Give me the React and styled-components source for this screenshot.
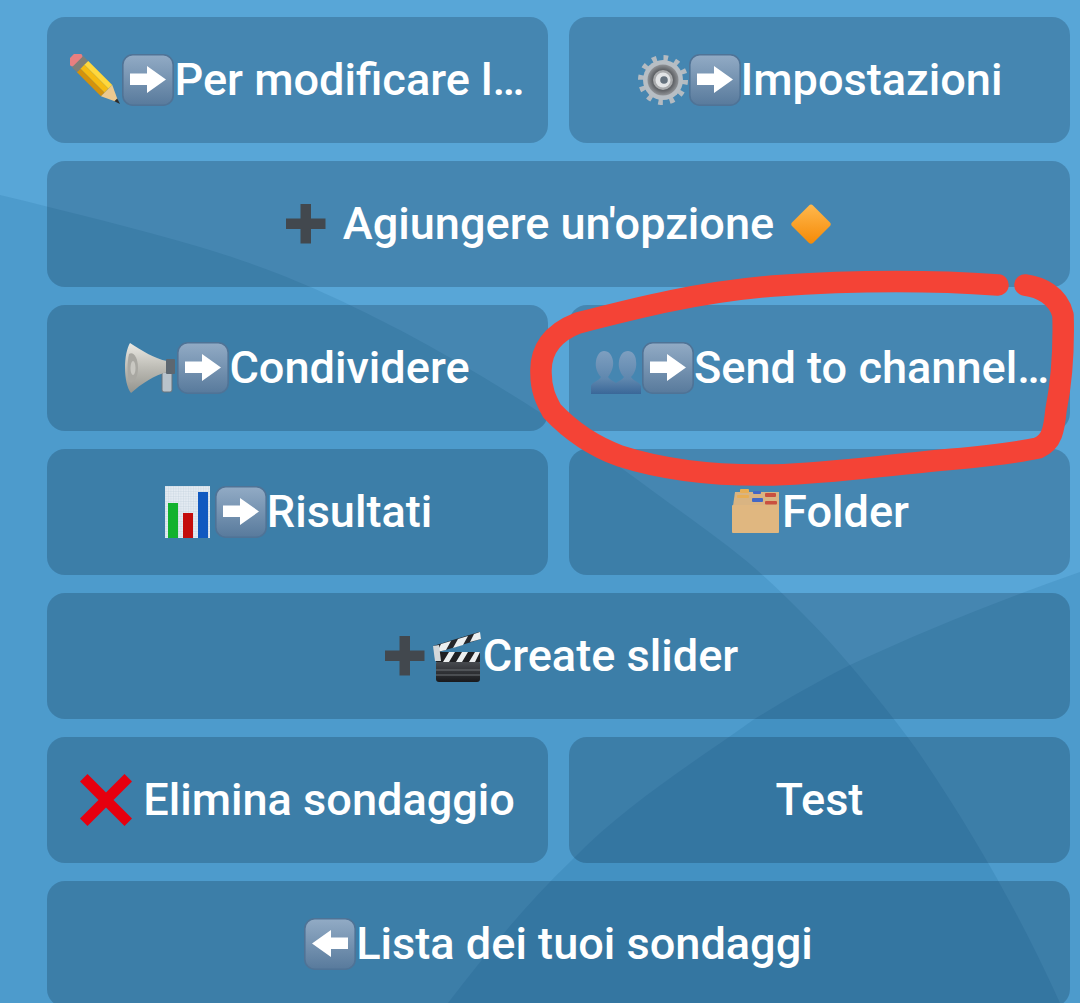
import styled, { createGlobalStyle } from "styled-components";

const GlobalStyle = createGlobalStyle`
  html, body {
    margin: 0;
    padding: 0;
    background: #58a6d7;
  }
`;

const Stage = styled.div`
  position: relative;
  width: 1080px;
  height: 1003px;
  overflow: hidden;
  background: #58a6d7;
  font-family: "Roboto", "Liberation Sans", sans-serif;
`;

const Backdrop = styled.svg`
  position: absolute;
  inset: 0;
`;

const Scribble = styled.svg`
  position: absolute;
  inset: 0;
  pointer-events: none;
`;

const ButtonGrid = styled.div`
  position: relative;
  display: grid;
  grid-template-columns: 501px 501px;
  grid-auto-rows: 126px;
  column-gap: 21px;
  row-gap: 18px;
  padding: 17px 0 0 47px;
`;

const MenuButton = styled.div`
  display: flex;
  align-items: center;
  justify-content: center;
  grid-column: ${(p) => (p.$wide ? "span 2" : "span 1")};
  border-radius: 18px;
  background: rgba(0, 20, 40, 0.21);
`;

const Label = styled.span`
  color: #fff;
  font-size: 45.1px;
  font-weight: 500;
  line-height: 52px;
  white-space: pre;
`;

const Icon = styled.svg`
  flex: none;
  width: 52px;
  height: 52px;
`;

const ArrowBox = ({ back }) => (
  <Icon viewBox="0 0 52 52">
    <defs>
      <linearGradient id="boxFill" x1="0" y1="0" x2="0" y2="1">
        <stop offset="0" stopColor="#92abc5" />
        <stop offset="1" stopColor="#587a9c" />
      </linearGradient>
    </defs>
    <rect x="0.8" y="0.8" width="50.4" height="50.4" rx="10" fill="url(#boxFill)" stroke="#4f7396" strokeWidth="1.6" />
    <path
      d="M8 19.5H25V12L44 25.5 25 39V31H8Z"
      fill="#fff"
      transform={back ? "matrix(-1 0 0 1 52 0)" : undefined}
    />
  </Icon>
);

const Pencil = () => (
  <Icon viewBox="0 0 52 52">
    <g transform="rotate(45 26 26)">
      <rect x="-8" y="18" width="9" height="16" rx="4" fill="#e87f80" />
      <rect x="0" y="18" width="7" height="16" fill="#7d7f78" />
      <rect x="7" y="18" width="34" height="5.5" fill="#ffd83d" />
      <rect x="7" y="23.5" width="34" height="5.5" fill="#f6bb12" />
      <rect x="7" y="29" width="34" height="5" fill="#d4920c" />
      <path d="M41 18L55 24.5V27.5L41 34Z" fill="#ecc98f" />
      <path d="M54 24L60 26 54 28Z" fill="#2b2b2b" />
    </g>
  </Icon>
);

const Gear = () => (
  <Icon viewBox="0 0 52 52">
    <defs>
      <radialGradient id="gearRing">
        <stop offset="0.6" stopColor="#55585c" />
        <stop offset="1" stopColor="#8f9296" />
      </radialGradient>
    </defs>
    <circle cx="26" cy="26" r="22" fill="none" stroke="#b4bbc1" strokeWidth="6" strokeDasharray="4.6 6.9" />
    <circle cx="26" cy="26" r="20" fill="#b7bec4" />
    <circle cx="26" cy="26" r="15.5" fill="url(#gearRing)" />
    <circle cx="26" cy="26" r="10" fill="#a9abad" />
    <circle cx="26" cy="26" r="7.5" fill="#e2e4e6" />
    <circle cx="27" cy="26" r="3.8" fill="#65727e" />
  </Icon>
);

const Megaphone = () => (
  <Icon viewBox="0 0 52 52">
    <defs>
      <linearGradient id="hornFill" x1="0" y1="0" x2="0" y2="1">
        <stop offset="0" stopColor="#eceae4" />
        <stop offset="0.5" stopColor="#bdbcb5" />
        <stop offset="1" stopColor="#94948e" />
      </linearGradient>
    </defs>
    <rect x="37" y="30" width="10" height="20" rx="2" fill="#b9c3cb" stroke="#68727b" />
    <path d="M5 1C16 8 30 17 42 19V30C30 33 16 42 6 51 2 46 0 36 0 26 0 15 2 6 5 1Z" fill="url(#hornFill)" />
    <rect x="41" y="17" width="9" height="15" rx="1" fill="#5d6770" />
    <path d="M4 12C8 9 13 15 13 26 13 37 8 42 4 40 2 32 2 20 4 12Z" fill="#a9a8a2" />
    <ellipse cx="8" cy="26" rx="2.5" ry="7" fill="#c9c8c2" />
  </Icon>
);

const BarChart = () => (
  <Icon viewBox="0 0 52 52">
    <defs>
      <pattern id="chartGrid" width="2.5" height="2.5" patternUnits="userSpaceOnUse">
        <rect width="2.5" height="2.5" fill="#e4ebf2" />
        <path d="M0 0H2.5M0 0V2.5" stroke="#b9c7d6" strokeWidth="0.5" />
      </pattern>
    </defs>
    <rect x="2" y="0" width="45" height="52" fill="url(#chartGrid)" />
    <rect x="5" y="17" width="10" height="35" fill="#12b22e" />
    <rect x="20" y="27" width="10" height="25" fill="#c40c0c" />
    <rect x="35" y="6" width="10" height="46" fill="#1159c0" />
  </Icon>
);

const Busts = () => (
  <Icon viewBox="0 0 52 52">
    <defs>
      <linearGradient id="bustFill" x1="0" y1="0" x2="0" y2="1">
        <stop offset="0" stopColor="#7e9fc0" />
        <stop offset="0.65" stopColor="#5f87ae" />
        <stop offset="1" stopColor="#3a6798" />
      </linearGradient>
    </defs>
    <path
      d="M1 52V44C2 40 9 39 11 35 7 31 5 25 6 19 7 13 10 9 14 9 19 9 22 13 23 19 24 25 21 31 18 35 20 38 24 39 26 41 28 39 32 38 34 35 30 31 28 25 29 19 30 13 33 9 38 9 42 9 46 13 46 19 47 25 45 31 41 35 43 39 50 40 51 44V52Z"
      fill="url(#bustFill)"
    />
  </Icon>
);

const CardBox = () => (
  <Icon viewBox="0 0 52 52">
    <path d="M3 20L5 6H49V20Z" fill="#d9b482" />
    <rect x="10" y="3" width="9" height="4" rx="1" fill="#e8ae55" />
    <rect x="7" y="9" width="12" height="3" rx="1" fill="#e8ae55" />
    <rect x="23" y="5" width="8" height="3" rx="1" fill="#4468c4" />
    <rect x="22" y="12" width="11" height="4" rx="1" fill="#4468c4" />
    <rect x="35" y="7" width="11" height="4" rx="1" fill="#c9503f" />
    <rect x="35" y="15" width="12" height="3.5" rx="1" fill="#c9503f" />
    <rect x="2" y="19" width="47" height="28" rx="1" fill="#e0b780" />
  </Icon>
);

const Clapper = () => (
  <Icon viewBox="0 0 52 52">
    <defs>
      <linearGradient id="clapFill" x1="0" y1="0" x2="0" y2="1">
        <stop offset="0" stopColor="#4a4d52" />
        <stop offset="1" stopColor="#191a1d" />
      </linearGradient>
    </defs>
    <rect x="5" y="31" width="44" height="21" rx="3" fill="url(#clapFill)" />
    <path d="M5 40H49M5 45H49" stroke="#6d7075" strokeWidth="1" />
    <rect x="5" y="22" width="44" height="10" fill="#1f2023" />
    <path d="M12 32L18 22H24L18 32ZM25 32L31 22H37L31 32ZM38 32L44 22H49L44 32Z" fill="#eceff0" />
    <path d="M2 16L48 2 50 9 5 23Z" fill="#25262a" />
    <path d="M10 14L20 11 15 20 6 22ZM27 9L37 6 32 15 22 18ZM43 4L49 2 50 9 39 12Z" fill="#eceff0" />
    <path d="M2 16L8 15 10 31H4Z" fill="#d4d8da" />
  </Icon>
);

const Plus = () => (
  <Icon viewBox="0 0 52 52">
    <path d="M20.5 6H31V20.5H45.5V31H31V45.5H20.5V31H6V20.5H20.5Z" fill="#42484e" />
  </Icon>
);

const Diamond = () => (
  <Icon viewBox="0 0 52 52">
    <defs>
      <linearGradient id="gemFill" x1="0" y1="0" x2="0" y2="1">
        <stop offset="0" stopColor="#ffb84d" />
        <stop offset="1" stopColor="#f58a07" />
      </linearGradient>
    </defs>
    <path d="M24 7.5C25 6.3 27 6.3 28 7.5L45 24.5C46 25.5 46 27 45 28L28 45C27 46 25 46 24 45L7 28C6 27 6 25.5 7 24.5Z" fill="url(#gemFill)" />
  </Icon>
);

const Cross = () => (
  <Icon viewBox="0 0 52 52">
    <path d="M7.5 0L26 18.5 44.5 0 52 7.5 33.5 26 52 44.5 44.5 52 26 33.5 7.5 52 0 44.5 18.5 26 0 7.5Z" fill="#e6000f" />
  </Icon>
);

const BackBox = () => <ArrowBox back />;

const BUTTONS = [
  { icons: [Pencil, ArrowBox], text: "Per modificare l…" },
  { icons: [Gear, ArrowBox], text: "Impostazioni" },
  { icons: [Plus], text: " Agiungere un'opzione ", after: Diamond, wide: true },
  { icons: [Megaphone, ArrowBox], text: "Condividere" },
  { icons: [Busts, ArrowBox], text: "Send to channel…" },
  { icons: [BarChart, ArrowBox], text: "Risultati" },
  { icons: [CardBox], text: "Folder" },
  { icons: [Plus, Clapper], text: "Create slider", wide: true },
  { icons: [Cross], text: " Elimina sondaggio" },
  { icons: [], text: "Test" },
  { icons: [BackBox], text: "Lista dei tuoi sondaggi", wide: true },
];

const App = () => {
  return (
    <Stage>
      <GlobalStyle />
      <Backdrop width="1080" height="1003" viewBox="0 0 1080 1003">
        <path
          d="M0 195C70 212 135 228 200 247 290 274 345 302 400 330 490 378 570 430 642 483 685 515 725 542 757 570 790 600 822 632 850 665 875 695 897 722 917 750 975 835 1020 915 1060 1003H0Z"
          fill="rgba(0, 80, 130, 0.125)"
        />
        <path
          d="M1080 572C1000 600 925 630 850 665 815 683 785 700 753 720 690 765 625 805 572 860 525 905 485 955 448 1003H1080Z"
          fill="rgba(0, 80, 130, 0.125)"
        />
      </Backdrop>
      <ButtonGrid>
        {BUTTONS.map(({ icons, text, after: After, wide }) => (
          <MenuButton key={text} $wide={wide}>
            {icons.map((Glyph, i) => (
              <Glyph key={i} />
            ))}
            <Label>{text}</Label>
            {After && <After />}
          </MenuButton>
        ))}
      </ButtonGrid>
      <Scribble width="1080" height="1003" viewBox="0 0 1080 1003">
        <path
          d="M998 285C940 281 860 280 773 286 700 292 640 307 578 323 552 333 540 350 541 373 541 390 546 400 552 411 570 430 590 445 620 456 670 472 720 476 773 475 830 473 880 466 914 463 960 458 1000 456 1038 448 1052 442 1054 430 1056 410 1062 380 1064 350 1063 315 1058 295 1040 287 1025 285 1012 286 1000 287"
          fill="none"
          stroke="#f44336"
          strokeWidth="21.5"
          strokeLinecap="round"
          strokeLinejoin="round"
        />
      </Scribble>
    </Stage>
  );
};

export default App;
